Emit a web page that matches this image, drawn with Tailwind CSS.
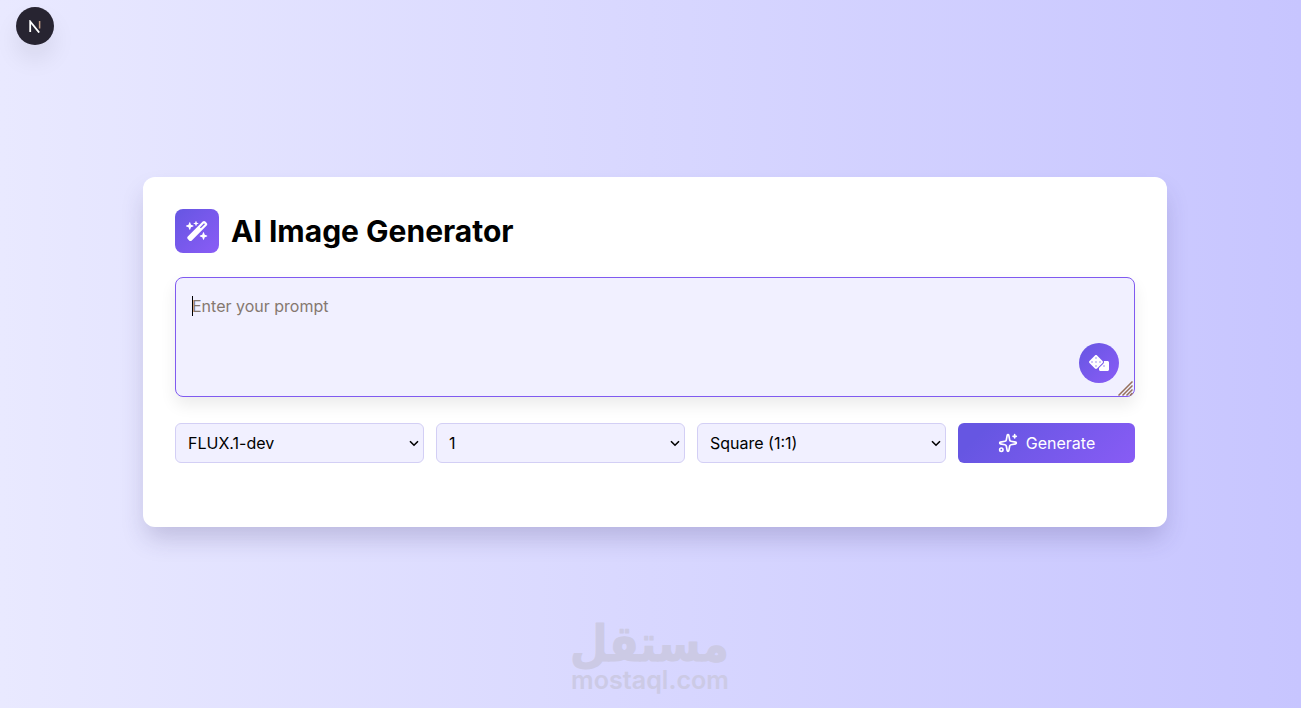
<!DOCTYPE html>
<html lang="en">
  <head>
    <meta charset="UTF-8" />
    <meta name="viewport" content="width=device-width, initial-scale=1.0" />
    <title>AI Image Generator</title>
    <script src="https://cdn.jsdelivr.net/npm/@tailwindcss/browser@4"></script>
  </head>
  <body class="h-screen overflow-hidden bg-linear-to-r/srgb from-[#e9e9ff] to-[#c7c5ff] font-['Inter',sans-serif] text-black">
    <!-- Dev badge -->
    <div
      class="absolute left-4 top-[7px] flex size-[38px] items-center justify-center rounded-full bg-[#272431] shadow-[0_14px_24px_rgba(0,0,0,0.08)]"
    >
      <svg class="h-[13px] w-3" viewBox="0 0 12 13" fill="none">
        <path d="M1.2 12V1.5L10.2 12.6" stroke="#fff" stroke-width="1.8" />
        <path d="M10.6 1V8.5" stroke="#c9a48c" stroke-width="1.5" />
      </svg>
    </div>

    <!-- Generator card -->
    <main class="ml-[143px] flex h-full w-[1024px] flex-col pt-[177px]">
      <div class="h-[350px] rounded-xl bg-white p-8 shadow-[0_14px_24px_-3px_rgba(60,50,110,0.22)]">
        <div class="mb-6 flex items-center gap-3">
          <div
            class="flex size-11 items-center justify-center rounded-lg bg-linear-135/srgb from-[#6656e2] to-[#8a5cf6] text-white"
          >
            <svg class="h-5 w-[22.5px]" viewBox="0 0 576 512" fill="currentColor">
              <path
                d="M234.7 42.7L197 56.8c-3 1.1-5 4-5 7.2s2 6.1 5 7.2l37.7 14.1L248.8 123c1.1 3 4 5 7.2 5s6.1-2 7.2-5l14.1-37.7L315 71.2c3-1.1 5-4 5-7.2s-2-6.1-5-7.2L277.3 42.7 263.2 5c-1.1-3-4-5-7.2-5s-6.1 2-7.2 5L234.7 42.7zM46.1 395.4c-18.7 18.7-18.7 49.1 0 67.9l34.6 34.6c18.7 18.7 49.1 18.7 67.9 0L529.9 116.5c18.7-18.7 18.7-49.1 0-67.9L495.3 14.1c-18.7-18.7-49.1-18.7-67.9 0L46.1 395.4zM484.6 82.6l-105 105-23.3-23.3 105-105 23.3 23.3zM7.5 117.2C3 118.9 0 123.2 0 128s3 9.1 7.5 10.8L64 160l21.2 56.5c1.7 4.5 6 7.5 10.8 7.5s9.1-3 10.8-7.5L128 160l56.5-21.2c4.5-1.7 7.5-6 7.5-10.8s-3-9.1-7.5-10.8L128 96 106.8 39.5C105.1 35 100.8 32 96 32s-9.1 3-10.8 7.5L64 96 7.5 117.2zm352 256c-4.5 1.7-7.5 6-7.5 10.8s3 9.1 7.5 10.8L416 416l21.2 56.5c1.7 4.5 6 7.5 10.8 7.5s9.1-3 10.8-7.5L480 416l56.5-21.2c4.5-1.7 7.5-6 7.5-10.8s-3-9.1-7.5-10.8L480 352l-21.2-56.5c-1.7-4.5-6-7.5-10.8-7.5s-9.1 3-10.8 7.5L416 352l-56.5 21.2z"
              />
            </svg>
          </div>
          <h1 class="text-[30px] font-bold leading-9">AI Image Generator</h1>
        </div>

        <!-- Prompt -->
        <div class="relative mb-[26px] h-[120px]">
          <textarea
            id="prompt"
            class="block h-full w-full resize-none rounded-lg border border-[#805af0] bg-[#f1f0ff] p-4 text-base leading-6 shadow-[0_8px_16px_rgba(0,0,0,0.08)] outline-none placeholder:text-[#85786f]"
            placeholder="Enter your prompt"
          ></textarea>
          <span class="absolute left-[17px] top-[19px] h-5 w-px bg-black"></span>
          <button
            id="random-btn"
            class="absolute bottom-[14px] right-4 flex size-10 items-center justify-center rounded-full bg-linear-135/srgb from-[#6656e2] to-[#8a5cf6] text-white"
          >
            <svg class="h-4 w-5" viewBox="0 0 640 512" fill="currentColor">
              <path
                d="M592 192H473.26c12.69 29.59 7.12 65.2-17 89.32L320 417.58V464c0 26.51 21.49 48 48 48h224c26.51 0 48-21.49 48-48V240c0-26.51-21.49-48-48-48zM433.63 189.3L258.7 14.37c-19.16-19.16-50.23-19.16-69.39 0L14.37 189.3c-19.16 19.16-19.16 50.23 0 69.39L189.3 433.63c19.16 19.16 50.23 19.16 69.39 0L433.63 258.7c19.16-19.17 19.16-50.24 0-69.4z"
              />
              <g fill="#8b7aec">
                <circle cx="96" cy="224" r="24" />
                <circle cx="224" cy="96" r="24" />
                <circle cx="224" cy="224" r="24" />
                <circle cx="224" cy="352" r="24" />
                <circle cx="352" cy="224" r="24" />
                <circle cx="480" cy="352" r="24" />
              </g>
            </svg>
          </button>
          <svg class="absolute bottom-px right-[2px] size-[15px]" viewBox="0 0 15 15" stroke="#96705c" stroke-width="1.5">
            <path d="M0.5 14.5L14.5 0.5M4.5 14.5L14.5 4.5M8.5 14.5L14.5 8.5M12 14.5L14.5 12" />
          </svg>
        </div>

        <!-- Options -->
        <div class="flex gap-3">
          <div class="relative w-[249px]">
            <select class="h-10 w-full appearance-none rounded-md border border-[#d3cff5] bg-[#f1f0ff] px-3 text-base">
              <option>FLUX.1-dev</option>
            </select>
            <svg class="absolute right-[5px] top-[17px] h-[7px] w-[10px]" viewBox="0 0 10 7" fill="none" stroke="#000" stroke-width="1.6">
              <path d="M1 1.2L5 5.2L9 1.2" />
            </svg>
          </div>
          <div class="relative w-[249px]">
            <select class="h-10 w-full appearance-none rounded-md border border-[#d3cff5] bg-[#f1f0ff] px-3 text-base">
              <option>1</option>
            </select>
            <svg class="absolute right-[5px] top-[17px] h-[7px] w-[10px]" viewBox="0 0 10 7" fill="none" stroke="#000" stroke-width="1.6">
              <path d="M1 1.2L5 5.2L9 1.2" />
            </svg>
          </div>
          <div class="relative w-[249px]">
            <select class="h-10 w-full appearance-none rounded-md border border-[#d3cff5] bg-[#f1f0ff] px-3 text-base">
              <option>Square (1:1)</option>
            </select>
            <svg class="absolute right-[5px] top-[17px] h-[7px] w-[10px]" viewBox="0 0 10 7" fill="none" stroke="#000" stroke-width="1.6">
              <path d="M1 1.2L5 5.2L9 1.2" />
            </svg>
          </div>
          <button
            id="generate-btn"
            class="flex h-10 flex-1 items-center justify-center gap-2 rounded-md bg-linear-135/srgb from-[#6656e2] from-15% to-[#885cf5] text-base text-white"
          >
            <svg
              class="size-5"
              viewBox="0 0 24 24"
              fill="none"
              stroke="currentColor"
              stroke-width="2"
              stroke-linecap="round"
              stroke-linejoin="round"
            >
              <path
                d="M11.017 2.814a1 1 0 0 1 1.966 0l1.051 5.558a2 2 0 0 0 1.594 1.594l5.558 1.051a1 1 0 0 1 0 1.966l-5.558 1.051a2 2 0 0 0-1.594 1.594l-1.051 5.558a1 1 0 0 1-1.966 0l-1.051-5.558a2 2 0 0 0-1.594-1.594l-5.558-1.051a1 1 0 0 1 0-1.966l5.558-1.051a2 2 0 0 0 1.594-1.594z"
              />
              <path d="M20 2v4M22 4h-4" />
              <circle cx="4" cy="20" r="2" />
            </svg>
            Generate
          </button>
        </div>
      </div>

      <!-- Watermark -->
      <svg class="mt-[88px] ml-[424px] h-[84px] w-[170px] shrink-0 overflow-visible" viewBox="0 0 170 84" fill="#cccae5">
        <text
          x="3"
          y="46"
          textLength="159"
          lengthAdjust="spacingAndGlyphs"
          font-size="50"
          stroke="#cccae5"
          stroke-width="1"
          stroke-linejoin="round"
          class="font-['DejaVu_Sans',sans-serif] font-bold"
        >مستقل</text>
        <text
          x="4"
          y="74"
          textLength="158"
          lengthAdjust="spacingAndGlyphs"
          font-size="25"
          class="font-['Inter',sans-serif] font-semibold"
        >mostaql.com</text>
      </svg>
    </main>
  </body>
</html>
